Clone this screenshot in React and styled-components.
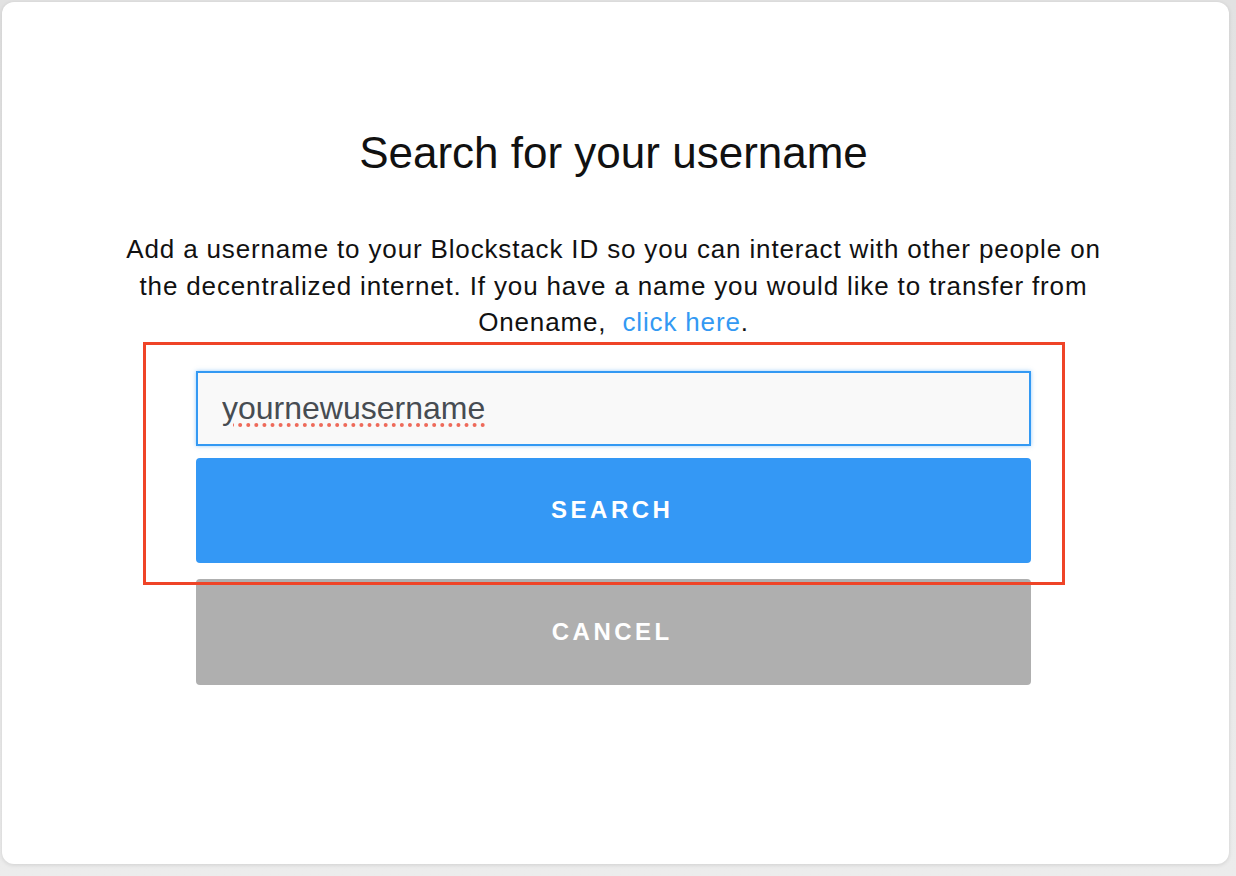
import styled, { createGlobalStyle } from "styled-components";

const GlobalStyle = createGlobalStyle`
  html, body {
    margin: 0;
    padding: 0;
    background: #e6e6e6;
    font-family: "Liberation Sans", Arial, sans-serif;
  }
`;

const Page = styled.div`
  width: 1236px;
  height: 876px;
  padding: 2px 7px 12px 2px;
  box-sizing: border-box;
  background: linear-gradient(180deg, #e2e2e2 0%, #ececec 100%);
`;

const Card = styled.div`
  position: relative;
  height: 100%;
  background: #fff;
  border-radius: 12px;
  box-shadow: 0 1px 4px rgba(0, 0, 0, 0.12);
  display: flex;
  flex-direction: column;
  align-items: center;
  padding: 125px 4px 0 0;
  box-sizing: border-box;
`;

const Title = styled.h1`
  margin: 0;
  font-size: 44px;
  font-weight: 400;
  color: #111;
  line-height: 52px;
`;

const Text = styled.p`
  margin: 52px 0 0;
  width: 1000px;
  text-align: center;
  font-size: 26px;
  letter-spacing: 0.85px;
  line-height: 36.5px;
  color: #111;
`;

const Link = styled.a`
  color: #3399f3;
  text-decoration: none;
  margin-left: 8px;
`;

const Form = styled.div`
  margin-top: 30px;
  width: 835px;
  display: flex;
  flex-direction: column;
  gap: 12px;
`;

const Input = styled.input`
  height: 75px;
  box-sizing: border-box;
  border: 2px solid #3399f3;
  box-shadow: 0 0 4px rgba(51, 153, 243, 0.5);
  background: #f9f9f9;
  padding: 0 24px;
  font-family: "Liberation Sans", Arial, sans-serif;
  font-size: 32px;
  color: #474c52;
  outline: none;
  text-decoration: underline dotted #ee6a5a;
  text-decoration-thickness: 4px;
  text-underline-offset: 5px;
`;

const Button = styled.button`
  height: ${({ muted }) => (muted ? "106px" : "105px")};
  border: none;
  border-radius: 4px;
  background: ${({ muted }) => (muted ? "#afafaf" : "#3498f5")};
  color: #fff;
  font-family: "Liberation Sans", Arial, sans-serif;
  font-weight: 700;
  font-size: 24px;
  letter-spacing: 3.5px;
  padding-left: 3.5px;
  margin-top: ${({ muted }) => (muted ? "4px" : "0")};
`;

const Highlight = styled.div`
  position: absolute;
  left: 141px;
  top: 340px;
  width: 922px;
  height: 243px;
  border: 3px solid #ef4427;
  box-sizing: border-box;
  pointer-events: none;
`;

export default function App() {
  return (
    <>
      <GlobalStyle />
      <Page>
        <Card>
          <Title>Search for your username</Title>
          <Text>
            Add a username to your Blockstack ID so you can interact with other people on
            the decentralized internet. If you have a name you would like to transfer from
            Onename, <Link href="#">click here</Link>.
          </Text>
          <Form>
            <Input defaultValue="yournewusername" spellCheck={false} />
            <Button>SEARCH</Button>
            <Button muted>CANCEL</Button>
          </Form>
          <Highlight />
        </Card>
      </Page>
    </>
  );
}
